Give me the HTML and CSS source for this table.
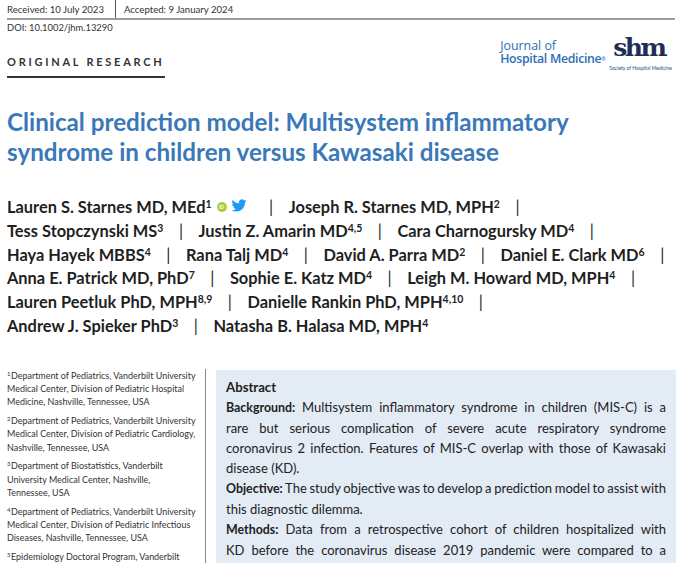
FILE: index.html
```html
<!DOCTYPE html>
<html lang="en">
<head>
<meta charset="utf-8">
<title>Clinical prediction model</title>
<link rel="stylesheet" href="styles.css">
</head>
<body>
<div class="page">
  <div class="dates">
    <span class="date">Received: 10 July 2023</span>
    <span class="date-sep"></span>
    <span class="date">Accepted: 9 January 2024</span>
  </div>
  <div class="subhead">
    <div class="subhead-left">
      <div class="doi">DOI: 10.1002/jhm.13290</div>
      <div class="section-label">ORIGINAL RESEARCH</div>
    </div>
    <div class="logos">
      <div class="jhm">
        <div class="jhm-top">Journal of</div>
        <div class="jhm-bottom">Hospital Medicine<span class="reg">®</span></div>
      </div>
      <div class="shm">
        <div class="shm-mark">shm<span class="shm-dot">.</span></div>
        <div class="shm-sub">Society of Hospital Medicine</div>
      </div>
    </div>
  </div>

  <h1 class="title">Clinical prediction model: Multisystem inflammatory<br>syndrome in children versus Kawasaki disease</h1>

  <div class="authors">
    <div class="author-line">
      <span class="author">Lauren S. Starnes MD, MEd<sup>1</sup></span>
      <span class="orcid">iD</span>
      <svg class="twitter" viewBox="0 0 24 24" aria-hidden="true"><path d="M23.953 4.57a10 10 0 01-2.825.775 4.958 4.958 0 002.163-2.723c-.951.555-2.005.959-3.127 1.184a4.92 4.92 0 00-8.384 4.482C7.690 8.095 4.067 6.130 1.640 3.162a4.822 4.822 0 00-.666 2.475c0 1.710.870 3.213 2.188 4.096a4.904 4.904 0 01-2.228-.616v.06a4.923 4.923 0 003.946 4.827 4.996 4.996 0 01-2.212.085 4.936 4.936 0 004.604 3.417 9.867 9.867 0 01-6.102 2.105c-.39 0-.779-.023-1.170-.067a13.995 13.995 0 007.557 2.209c9.053 0 13.998-7.496 13.998-13.985 0-.21 0-.42-.015-.63A9.935 9.935 0 0024 4.590z"/></svg>
      <span class="sep">|</span>
      <span class="author">Joseph R. Starnes MD, MPH<sup>2</sup></span>
      <span class="sep">|</span>
    </div>
    <div class="author-line">
      <span class="author">Tess Stopczynski MS<sup>3</sup></span>
      <span class="sep">|</span>
      <span class="author">Justin Z. Amarin MD<sup>4,5</sup></span>
      <span class="sep">|</span>
      <span class="author">Cara Charnogursky MD<sup>4</sup></span>
      <span class="sep">|</span>
    </div>
    <div class="author-line">
      <span class="author">Haya Hayek MBBS<sup>4</sup></span>
      <span class="sep">|</span>
      <span class="author">Rana Talj MD<sup>4</sup></span>
      <span class="sep">|</span>
      <span class="author">David A. Parra MD<sup>2</sup></span>
      <span class="sep">|</span>
      <span class="author">Daniel E. Clark MD<sup>6</sup></span>
      <span class="sep">|</span>
    </div>
    <div class="author-line">
      <span class="author">Anna E. Patrick MD, PhD<sup>7</sup></span>
      <span class="sep">|</span>
      <span class="author">Sophie E. Katz MD<sup>4</sup></span>
      <span class="sep">|</span>
      <span class="author">Leigh M. Howard MD, MPH<sup>4</sup></span>
      <span class="sep">|</span>
    </div>
    <div class="author-line">
      <span class="author">Lauren Peetluk PhD, MPH<sup>8,9</sup></span>
      <span class="sep">|</span>
      <span class="author">Danielle Rankin PhD, MPH<sup>4,10</sup></span>
      <span class="sep">|</span>
    </div>
    <div class="author-line">
      <span class="author">Andrew J. Spieker PhD<sup>3</sup></span>
      <span class="sep">|</span>
      <span class="author">Natasha B. Halasa MD, MPH<sup>4</sup></span>
    </div>
  </div>

  <div class="main">
    <aside class="affiliations">
      <p><sup>1</sup>Department of Pediatrics, Vanderbilt University Medical Center, Division of Pediatric Hospital Medicine, Nashville, Tennessee, USA</p>
      <p><sup>2</sup>Department of Pediatrics, Vanderbilt University Medical Center, Division of Pediatric Cardiology, Nashville, Tennessee, USA</p>
      <p><sup>3</sup>Department of Biostatistics, Vanderbilt University Medical Center, Nashville,<br>Tennessee, USA</p>
      <p><sup>4</sup>Department of Pediatrics, Vanderbilt University Medical Center, Division of Pediatric Infectious Diseases, Nashville, Tennessee, USA</p>
      <p><sup>5</sup>Epidemiology Doctoral Program, Vanderbilt University School of Medicine, Nashville, Tennessee, USA</p>
    </aside>
    <section class="abstract">
      <h2 class="abstract-title">Abstract</h2>
      <p>
        <span class="ln"><b>Background:</b> Multisystem inflammatory syndrome in children (MIS-C) is a</span>
        <span class="ln">rare but serious complication of severe acute respiratory syndrome</span>
        <span class="ln">coronavirus 2 infection. Features of MIS-C overlap with those of Kawasaki</span>
        <span class="ln ln-last">disease (KD).</span>
      </p>
      <p>
        <span class="ln"><b>Objective:</b> The study objective was to develop a prediction model to assist with</span>
        <span class="ln ln-last">this diagnostic dilemma.</span>
      </p>
      <p>
        <span class="ln"><b>Methods:</b> Data from a retrospective cohort of children hospitalized with</span>
        <span class="ln">KD before the coronavirus disease 2019 pandemic were compared to a</span>
        <span class="ln">prospective cohort of children hospitalized with MIS-C. A bootstrapped</span>
        <span class="ln ln-last">least absolute shrinkage and selection operator approach was used.</span>
      </p>
    </section>
  </div>
</div>
</body>
</html>
```

FILE: styles.css
```css
html, body {
  margin: 0;
  padding: 0;
  background: #ffffff;
}

body {
  font-family: Lato, "Open Sans", "Liberation Sans", sans-serif;
  color: #222;
  overflow: hidden;
}

.page {
  padding: 0 5px 0 7px;
}

/* dates bar */
.dates {
  display: flex;
  align-items: stretch;
  height: 18px;
  border-bottom: 2px solid #9c9c9c;
  font-size: 9.6px;
  color: #333;
}

.date {
  line-height: 14px;
  padding-top: 3px;
}

.date-sep {
  width: 1px;
  background: #555;
  margin: 0 8px 0 11px;
}

/* doi + logos */
.subhead {
  display: flex;
  justify-content: space-between;
  align-items: flex-start;
}

.doi {
  font-size: 9.4px;
  line-height: 14px;
  margin-top: 1px;
  color: #333;
}

.section-label {
  display: inline-block;
  margin-top: 20px;
  font-size: 11px;
  line-height: 14px;
  font-weight: 700;
  letter-spacing: 2.75px;
  color: #333;
  padding-bottom: 7px;
  border-bottom: 2px solid #333;
}

.logos {
  display: flex;
  align-items: flex-start;
  gap: 4px;
  margin-top: 17px;
  margin-right: 3px;
}

.jhm {
  color: #2e6db3;
  font-family: "Open Sans", Lato, sans-serif;
  padding-top: 2px;
}

.jhm-top {
  font-size: 12.4px;
  line-height: 13px;
}

.jhm-bottom {
  font-size: 12.3px;
  line-height: 14px;
  letter-spacing: -0.3px;
  font-weight: 600;
}

.reg {
  font-size: 5px;
  vertical-align: 2px;
}

.shm {
  display: flex;
  flex-direction: column;
  align-items: center;
}

.shm-mark {
  font-family: "DejaVu Serif", "Liberation Serif", serif;
  font-weight: 700;
  font-size: 25px;
  line-height: 22px;
  letter-spacing: -2.5px;
  color: #1d2e57;
}

.shm-dot {
  font-size: 10px;
  letter-spacing: 0;
}

.shm-sub {
  font-size: 5px;
  line-height: 7px;
  color: #2e4f8c;
  white-space: nowrap;
  margin-top: 1px;
}

/* title */
.title {
  margin: 29px 0 0 0;
  font-size: 24.2px;
  line-height: 30px;
  font-weight: 700;
  color: #3b78b7;
}

/* authors */
.authors {
  margin-top: 28px;
  font-size: 16.4px;
  font-weight: 700;
  line-height: 23.8px;
  color: #1f1f1f;
}

.author-line {
  display: flex;
  align-items: center;
  white-space: nowrap;
}

.author sup {
  font-size: 10.5px;
  line-height: 0;
  vertical-align: 5px;
}

.sep {
  font-weight: 400;
  margin: 0 15.5px;
}

.orcid {
  display: inline-flex;
  align-items: center;
  justify-content: center;
  width: 10px;
  height: 10px;
  border-radius: 50%;
  background: #a6ce39;
  color: #fff;
  font-size: 5px;
  line-height: 10px;
  font-weight: 700;
  margin-left: 5px;
}

.twitter {
  width: 18px;
  height: 15px;
  fill: #1d9bf0;
  margin-left: 3px;
  margin-right: 6px;
  margin-top: -3px;
}

/* main two column */
.main {
  display: flex;
  align-items: stretch;
  margin-top: 31px;
  height: 260px;
}

.affiliations {
  width: 190px;
  flex: none;
  padding-right: 8px;
  border-right: 1.5px solid #888;
  font-size: 8.95px;
  line-height: 13.3px;
  color: #333;
}

.affiliations p {
  margin: 0 0 5.4px 0;
}

.affiliations sup {
  font-size: 6px;
  line-height: 0;
  vertical-align: 3px;
  margin-right: 0.5px;
}

.abstract {
  margin-left: 10px;
  width: 460px;
  flex: none;
  box-sizing: border-box;
  background: #e3ebf5;
  padding: 9px 10px 0 10px;
  margin-top: 1px;
  font-size: 13px;
  line-height: 20px;
  color: #222;
}

.abstract-title {
  margin: 0 0 2px 0;
  font-size: 13.2px;
  line-height: 16px;
  font-weight: 700;
}

.abstract p {
  margin: 0;
}

.abstract b {
  font-size: 12.4px;
}

.ln {
  display: block;
  text-align: justify;
  text-align-last: justify;
  word-spacing: -2px;
}

.ln-last {
  text-align-last: left;
  word-spacing: normal;
}
```
